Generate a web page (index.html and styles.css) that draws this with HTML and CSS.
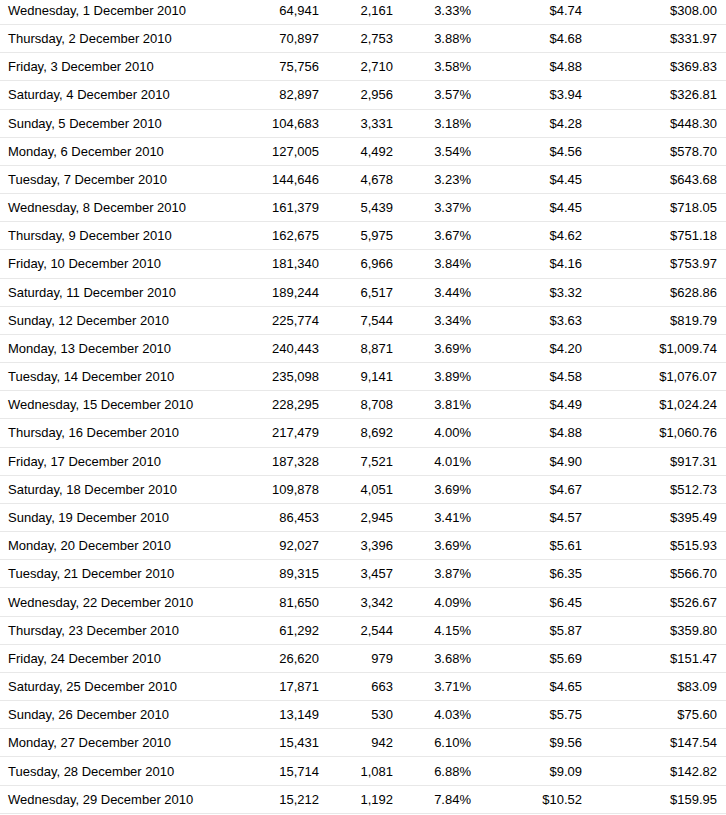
FILE: index.html
```html
<!DOCTYPE html>
<html lang="en">
<head>
<meta charset="utf-8">
<title>December 2010</title>
<link rel="stylesheet" href="styles.css">
</head>
<body>
<div class="wrap">
<table class="stats">
<colgroup>
<col class="c-date"><col class="c-a"><col class="c-b"><col class="c-c"><col class="c-d"><col class="c-e"><col class="c-pad">
</colgroup>
<tbody>
<tr><td class="date">Wednesday, 1 December 2010</td><td>64,941</td><td>2,161</td><td>3.33%</td><td>$4.74</td><td>$308.00</td><td></td></tr>
<tr><td class="date">Thursday, 2 December 2010</td><td>70,897</td><td>2,753</td><td>3.88%</td><td>$4.68</td><td>$331.97</td><td></td></tr>
<tr><td class="date">Friday, 3 December 2010</td><td>75,756</td><td>2,710</td><td>3.58%</td><td>$4.88</td><td>$369.83</td><td></td></tr>
<tr><td class="date">Saturday, 4 December 2010</td><td>82,897</td><td>2,956</td><td>3.57%</td><td>$3.94</td><td>$326.81</td><td></td></tr>
<tr><td class="date">Sunday, 5 December 2010</td><td>104,683</td><td>3,331</td><td>3.18%</td><td>$4.28</td><td>$448.30</td><td></td></tr>
<tr><td class="date">Monday, 6 December 2010</td><td>127,005</td><td>4,492</td><td>3.54%</td><td>$4.56</td><td>$578.70</td><td></td></tr>
<tr><td class="date">Tuesday, 7 December 2010</td><td>144,646</td><td>4,678</td><td>3.23%</td><td>$4.45</td><td>$643.68</td><td></td></tr>
<tr><td class="date">Wednesday, 8 December 2010</td><td>161,379</td><td>5,439</td><td>3.37%</td><td>$4.45</td><td>$718.05</td><td></td></tr>
<tr><td class="date">Thursday, 9 December 2010</td><td>162,675</td><td>5,975</td><td>3.67%</td><td>$4.62</td><td>$751.18</td><td></td></tr>
<tr><td class="date">Friday, 10 December 2010</td><td>181,340</td><td>6,966</td><td>3.84%</td><td>$4.16</td><td>$753.97</td><td></td></tr>
<tr><td class="date">Saturday, 11 December 2010</td><td>189,244</td><td>6,517</td><td>3.44%</td><td>$3.32</td><td>$628.86</td><td></td></tr>
<tr><td class="date">Sunday, 12 December 2010</td><td>225,774</td><td>7,544</td><td>3.34%</td><td>$3.63</td><td>$819.79</td><td></td></tr>
<tr><td class="date">Monday, 13 December 2010</td><td>240,443</td><td>8,871</td><td>3.69%</td><td>$4.20</td><td>$1,009.74</td><td></td></tr>
<tr><td class="date">Tuesday, 14 December 2010</td><td>235,098</td><td>9,141</td><td>3.89%</td><td>$4.58</td><td>$1,076.07</td><td></td></tr>
<tr><td class="date">Wednesday, 15 December 2010</td><td>228,295</td><td>8,708</td><td>3.81%</td><td>$4.49</td><td>$1,024.24</td><td></td></tr>
<tr><td class="date">Thursday, 16 December 2010</td><td>217,479</td><td>8,692</td><td>4.00%</td><td>$4.88</td><td>$1,060.76</td><td></td></tr>
<tr><td class="date">Friday, 17 December 2010</td><td>187,328</td><td>7,521</td><td>4.01%</td><td>$4.90</td><td>$917.31</td><td></td></tr>
<tr><td class="date">Saturday, 18 December 2010</td><td>109,878</td><td>4,051</td><td>3.69%</td><td>$4.67</td><td>$512.73</td><td></td></tr>
<tr><td class="date">Sunday, 19 December 2010</td><td>86,453</td><td>2,945</td><td>3.41%</td><td>$4.57</td><td>$395.49</td><td></td></tr>
<tr><td class="date">Monday, 20 December 2010</td><td>92,027</td><td>3,396</td><td>3.69%</td><td>$5.61</td><td>$515.93</td><td></td></tr>
<tr><td class="date">Tuesday, 21 December 2010</td><td>89,315</td><td>3,457</td><td>3.87%</td><td>$6.35</td><td>$566.70</td><td></td></tr>
<tr><td class="date">Wednesday, 22 December 2010</td><td>81,650</td><td>3,342</td><td>4.09%</td><td>$6.45</td><td>$526.67</td><td></td></tr>
<tr><td class="date">Thursday, 23 December 2010</td><td>61,292</td><td>2,544</td><td>4.15%</td><td>$5.87</td><td>$359.80</td><td></td></tr>
<tr><td class="date">Friday, 24 December 2010</td><td>26,620</td><td>979</td><td>3.68%</td><td>$5.69</td><td>$151.47</td><td></td></tr>
<tr><td class="date">Saturday, 25 December 2010</td><td>17,871</td><td>663</td><td>3.71%</td><td>$4.65</td><td>$83.09</td><td></td></tr>
<tr><td class="date">Sunday, 26 December 2010</td><td>13,149</td><td>530</td><td>4.03%</td><td>$5.75</td><td>$75.60</td><td></td></tr>
<tr><td class="date">Monday, 27 December 2010</td><td>15,431</td><td>942</td><td>6.10%</td><td>$9.56</td><td>$147.54</td><td></td></tr>
<tr><td class="date">Tuesday, 28 December 2010</td><td>15,714</td><td>1,081</td><td>6.88%</td><td>$9.09</td><td>$142.82</td><td></td></tr>
<tr><td class="date">Wednesday, 29 December 2010</td><td>15,212</td><td>1,192</td><td>7.84%</td><td>$10.52</td><td>$159.95</td><td></td></tr>
</tbody>
</table>
</div>
</body>
</html>
```

FILE: styles.css
```css
html, body {
  margin: 0;
  padding: 0;
  background: #ffffff;
}

body {
  font-family: "Liberation Sans", Arial, sans-serif;
  font-size: 13px;
  color: #000000;
  overflow: hidden;
}

.wrap {
  margin-top: -3.2px;
}

.stats {
  width: 726px;
  table-layout: fixed;
  border-collapse: separate;
  border-spacing: 0;
}

.c-date { width: 240px; }
.c-a { width: 79px; }
.c-b { width: 74px; }
.c-c { width: 78px; }
.c-d { width: 111px; }
.c-e { width: 135px; }
.c-pad { width: 9px; }

.stats td {
  height: 27.18px;
  padding: 0;
  text-align: right;
  vertical-align: middle;
  white-space: nowrap;
  border-bottom: 1px solid #e8e8e8;
  line-height: 15px;
}

.stats td.date {
  text-align: left;
  padding-left: 8px;
}
```
